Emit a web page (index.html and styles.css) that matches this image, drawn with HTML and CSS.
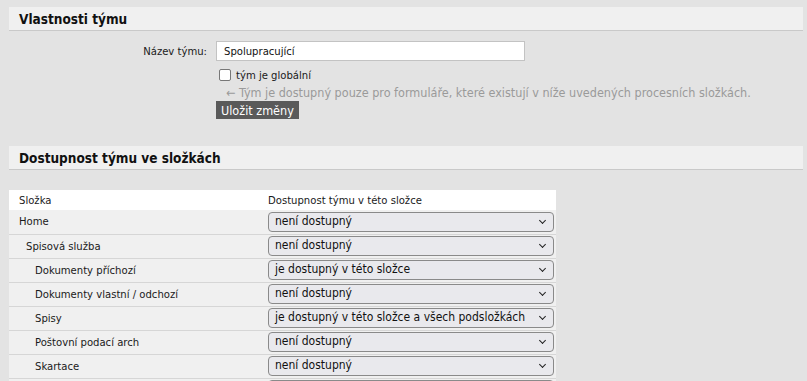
FILE: index.html
```html
<!DOCTYPE html>
<html lang="cs">
<head>
  <meta charset="UTF-8" />
  <title>Vlastnosti týmu</title>
  <link rel="stylesheet" href="styles.css">
</head>
<body>
  <div class="section-head">Vlastnosti týmu</div>

  <div class="form">
    <label class="form-label" for="name">Název týmu:</label>
    <input class="text-input" id="name" type="text" value="Spolupracující">

    <div></div>
    <label class="check"><input type="checkbox"><span class="box"></span>tým je globální</label>

    <div></div>
    <div class="hint">&larr; Tým je dostupný pouze pro formuláře, které existují v níže uvedených procesních složkách.</div>

    <div></div>
    <div><button class="save">Uložit změny</button></div>
  </div>

  <div class="section-head">Dostupnost týmu ve složkách</div>

  <table class="folders">
    <thead>
      <tr>
        <th>Složka</th>
        <th>Dostupnost týmu v této složce</th>
      </tr>
    </thead>
    <tbody>
      <tr>
        <td class="lvl0">Home</td>
        <td><div class="select">není dostupný</div></td>
      </tr>
      <tr>
        <td class="lvl1">Spisová služba</td>
        <td><div class="select">není dostupný</div></td>
      </tr>
      <tr>
        <td class="lvl2">Dokumenty příchozí</td>
        <td><div class="select">je dostupný v této složce</div></td>
      </tr>
      <tr>
        <td class="lvl2">Dokumenty vlastní / odchozí</td>
        <td><div class="select">není dostupný</div></td>
      </tr>
      <tr>
        <td class="lvl2">Spisy</td>
        <td><div class="select">je dostupný v této složce a všech podsložkách</div></td>
      </tr>
      <tr>
        <td class="lvl2">Poštovní podací arch</td>
        <td><div class="select">není dostupný</div></td>
      </tr>
      <tr>
        <td class="lvl2">Skartace</td>
        <td><div class="select">není dostupný</div></td>
      </tr>
      <tr>
        <td class="lvl2"></td>
        <td><div class="select"></div></td>
      </tr>
    </tbody>
  </table>
</body>
</html>
```

FILE: styles.css
```css
* {
  box-sizing: border-box;
}

body {
  margin: 0;
  padding: 7px 4px 0 9px;
  background: #e3e3e3;
  color: #1a1a1a;
  font-family: 'DejaVu Sans Condensed', 'DejaVu Sans', sans-serif;
  font-size: 11.2px;
}

.section-head {
  background: #f0f0f0;
  border-bottom: 1px solid #c9c9c9;
  height: 24px;
  padding: 4px 10px 0;
  font-size: 13.5px;
  font-weight: bold;
  color: #111;
}

.form {
  display: grid;
  grid-template-columns: 198px 1fr;
  column-gap: 9px;
  padding: 10px 0 27px;
}

.form-label {
  text-align: right;
  align-self: center;
}

.text-input {
  width: 309px;
  height: 20px;
  border: 1px solid #c3c3c3;
  background: #fff;
  padding: 0 7px;
  font: inherit;
  color: #111;
  outline: none;
}

.check {
  display: flex;
  align-items: center;
  gap: 5px;
  margin: 7px 0 0 3px;
  height: 14px;
}

.check input {
  display: none;
}

.check .box {
  width: 12px;
  height: 12px;
  border: 1px solid #777;
  border-radius: 2px;
  background: #fff;
}

.hint {
  color: #9a9a9a;
  margin: 3px 0 0 10px;
  font-size: 12.5px;
  height: 16px;
}

.save {
  margin-top: 0;
  height: 18px;
  padding: 0 5px;
  background: #5a5a5a;
  color: #fff;
  border: none;
  font: inherit;
  font-size: 12.5px;
  cursor: pointer;
}

.folders {
  margin-top: 20px;
  border-collapse: collapse;
  width: 547px;
}

.folders th {
  background: #fff;
  font-weight: normal;
  text-align: left;
  height: 20px;
  padding: 0 0 0 10px;
}

.folders th + th {
  padding-left: 6px;
}

.folders td {
  background: #f0f0f0;
  border-bottom: 1px solid #d6d6d6;
  height: 24px;
  padding: 0;
}

.folders td:first-child {
  width: 253px;
}

.lvl0 { padding-left: 10px !important; }
.lvl1 { padding-left: 17px !important; }
.lvl2 { padding-left: 26px !important; }

.select {
  position: relative;
  height: 20px;
  margin: 0 2px 0 6px;
  border: 1px solid #8a8a8a;
  border-radius: 4px;
  background: #e9e9ed;
  padding: 1px 6px 0;
  font-size: 12px;
  color: #111;
}

.select::after {
  content: '';
  position: absolute;
  right: 8px;
  top: 5px;
  width: 4px;
  height: 4px;
  border-right: 1.5px solid #222;
  border-bottom: 1.5px solid #222;
  transform: rotate(45deg);
}
```
